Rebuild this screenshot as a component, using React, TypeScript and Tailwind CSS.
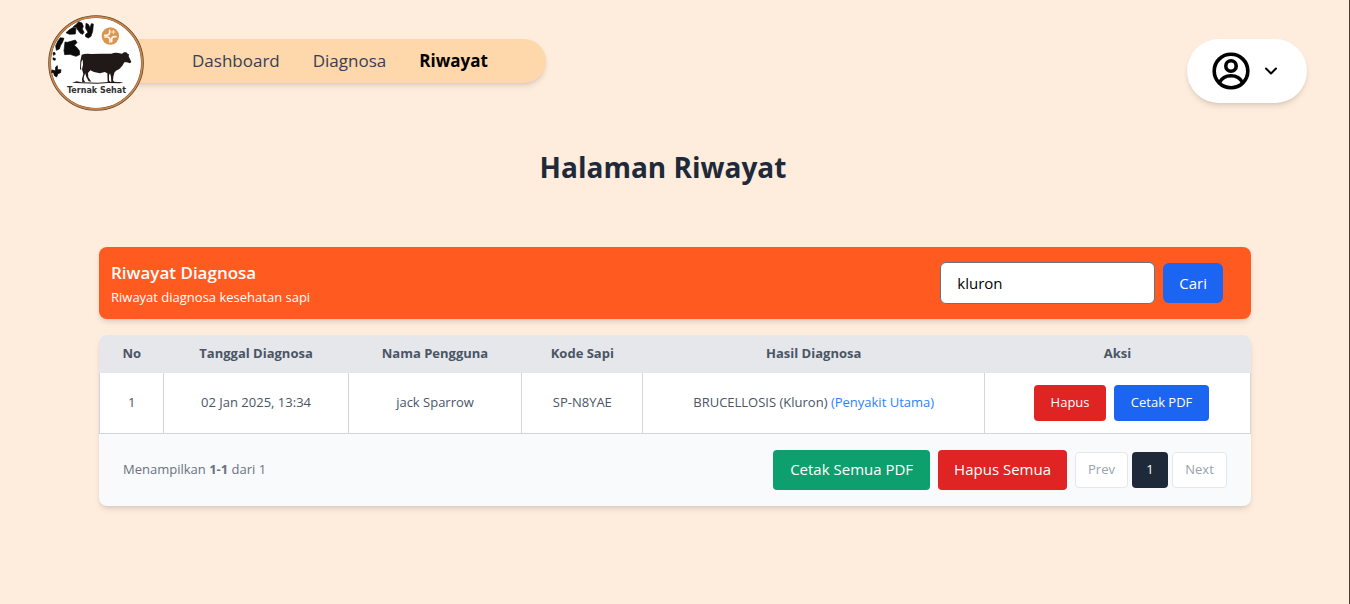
import { useState } from "react";

const columns = [
  { title: "No", width: "w-[5.6%]" },
  { title: "Tanggal Diagnosa", width: "w-[16%]" },
  { title: "Nama Pengguna", width: "w-[15.1%]" },
  { title: "Kode Sapi", width: "w-[10.5%]" },
  { title: "Hasil Diagnosa", width: "w-[29.7%]" },
  { title: "Aksi", width: "w-[23.1%]" },
];

const rows = [
  {
    no: 1,
    date: "02 Jan 2025, 13:34",
    user: "jack Sparrow",
    code: "SP-N8YAE",
    result: "BRUCELLOSIS (Kluron)",
    note: "(Penyakit Utama)",
  },
];

function Logo() {
  return (
    <svg viewBox="0 0 96 96" className="relative z-10 size-24 shrink-0" role="img" aria-label="Ternak Sehat">
      <circle cx="48" cy="48" r="46.4" fill="#fff" stroke="#5b4636" strokeWidth="2.8" />
      <circle cx="48" cy="48" r="46.2" fill="none" stroke="#cf8745" strokeWidth="1.7" />
      <g transform="translate(0 5) scale(0.33333)">
        <g fill="#0b0b0b" stroke="#0b0b0b" strokeWidth="2" strokeLinejoin="round">
          <path d="M54 38 L66 28 L76 22 L84 25 L82 42 L64 43 Z" />
          <path d="M86 12 L92 5 L102 9 L106 19 L103 27 L108 37 L104 43 L97 40 L91 32 L84 22 L76 20 Z" />
          <path d="M114 10 L121 13 L126 23 L130 11 L136 12 L134 34 L129 49 L121 54 L113 50 L112 44 L120 37 L113 25 Z" />
          <path d="M51 66 L58 67 L72 63 L82 60 L87 68 L79 76 L86 82 L94 92 L95 104 L84 109 L66 103 L50 104 L48 92 Z" />
          <path d="M30 62 L37 53 L48 55 L43 68 L38 76 L34 87 L25 91 L23 77 Z" />
          <path d="M15 98 L20 97 L22 103 L16 106 Z" />
          <path d="M15 113 L23 116 L21 121 L15 119 Z" />
          <path d="M23 141 L28 137 L29 149 L39 149 L38 158 L30 161 L26 171 L19 167 L17 158 L11 158 L12 150 L22 152 Z" />
        </g>
        <circle cx="187" cy="48" r="26" fill="#dd944e" />
        <g fill="none" stroke="#fff6ec" strokeWidth="5" strokeLinecap="round">
          <path d="M185 31 V39 Q184 45 177 46 H170" />
          <path d="M171 51 H178 Q185 52 186 59 V66" />
          <path d="M191 65 V58 Q191 51 198 50 H204" />
          <path d="M191 36 H201 M196 31 V41" strokeWidth="2.5" />
        </g>
        <g fill="#211917">
          <path d="M101 104 Q112 100 130 102 L160 101 L190 101 Q200 97 211 99 L222 101 L228 97 L235 97 L239 101 L243 103 L242 109 L247 119 L250 126 L246 130 L237 127 L229 127 L223 137 L214 147 L204 152 L199 158 L196 170 L195 181 L200 187 H190 L189 170 L186 160 L183 166 L183 181 L187 187 H179 L178 160 L170 156 L156 160 L138 156 L127 151 L120 159 L121 172 L130 185 L122 184 L114 169 L112 160 L108 169 L107 179 L112 187 H103 L102 177 L106 162 L102 148 L105 134 L104 118 L100 126 L99 140 L100 151 L96 147 L97 124 Z" />
          <path d="M72 188 L86 184 L100 187 L150 188 L190 185 L226 187 L216 190 L180 189 L148 191 L102 190 Z" />
        </g>
      </g>
      <text x="48.500" y="77.500" textAnchor="middle" fontSize="8" fontWeight="700" fill="#303030" fontFamily="DejaVu Sans, sans-serif">
        Ternak Sehat
      </text>
    </svg>
  );
}

function UserIcon() {
  return (
    <svg viewBox="0 0 40 40" className="size-10" fill="none" stroke="#000" strokeWidth="3.6" aria-hidden="true">
      <circle cx="20" cy="20" r="16.800" />
      <circle cx="20" cy="15" r="5.200" />
      <path d="M8.500 31.500 C13 22.500 27 22.500 31.500 31.500" />
    </svg>
  );
}

export default function App() {
  const [query, setQuery] = useState("kluron");

  return (
    <div className="min-h-screen bg-[#feecdc] font-['Segoe_UI','Open_Sans',sans-serif] text-[15px] shadow-[inset_-1px_0_0_#463c38]">
      <header className="flex items-start justify-between pt-[15px] pr-[43px] pl-12">
        <div className="flex items-start">
          <Logo />
          <nav className="mt-6 -ml-6 flex h-11 items-center gap-[33px] rounded-r-full bg-[#fed7aa] pr-[58px] pl-[72px] text-[17px] font-medium text-gray-700 shadow-md">
            <a href="#dashboard">Dashboard</a>
            <a href="#diagnosa">Diagnosa</a>
            <a href="#riwayat" aria-current="page" className="font-bold text-black">
              Riwayat
            </a>
          </nav>
        </div>
        <button type="button" aria-label="Menu pengguna" className="mt-6 flex h-16 w-[120px] items-center gap-3 rounded-full bg-white pl-6 shadow-md">
          <UserIcon />
          <svg viewBox="0 0 16 16" className="size-4" fill="none" stroke="#000" strokeWidth="2" strokeLinecap="round" strokeLinejoin="round" aria-hidden="true">
            <path d="M3 5.500 L8 10.500 L13 5.500" />
          </svg>
        </button>
      </header>

      <main className="pt-9">
        <h1 className="pr-6 text-center text-[28px] leading-10 font-bold text-gray-800">Halaman Riwayat</h1>

        <div className="mx-auto mt-15 max-w-6xl">
          <section className="flex h-[72px] items-center justify-between rounded-lg bg-[#ff5a1f] pr-7 pl-3 text-white shadow-md">
            <div className="pt-1">
              <h2 className="text-[17px] leading-6 font-semibold">Riwayat Diagnosa</h2>
              <p className="text-[13px] leading-6">Riwayat diagnosa kesehatan sapi</p>
            </div>
            <form className="flex items-center gap-2" onSubmit={(event) => event.preventDefault()}>
              <input
                type="text"
                aria-label="Cari riwayat"
                value={query}
                onChange={(event) => setQuery(event.target.value)}
                className="h-[42px] w-[215px] rounded-md border border-gray-500 bg-white px-4 text-black"
              />
              <button type="submit" className="h-10 rounded-md bg-[#1c64f2] px-4">
                Cari
              </button>
            </form>
          </section>

          <section className="mt-4 overflow-hidden rounded-lg bg-[#f9fafb] shadow-md">
            <table className="w-full table-fixed border-collapse bg-gray-200 text-center text-[13px] text-gray-600">
              <thead>
                <tr className="h-[38px]">
                  {columns.map((column) => (
                    <th key={column.title} scope="col" className={`${column.width} font-bold`}>
                      {column.title}
                    </th>
                  ))}
                </tr>
              </thead>
              <tbody className="bg-white">
                {rows.map((row) => (
                  <tr key={row.no} className="h-[60px] *:border-x *:border-b *:border-gray-300">
                    <td>{row.no}</td>
                    <td>{row.date}</td>
                    <td>{row.user}</td>
                    <td>{row.code}</td>
                    <td>
                      {row.result} <span className="text-blue-500">{row.note}</span>
                    </td>
                    <td>
                      <div className="flex justify-center gap-2 pl-2 text-white">
                        <button type="button" className="h-9 w-[72px] rounded bg-[#e02424]">
                          Hapus
                        </button>
                        <button type="button" className="h-9 w-[95px] rounded bg-[#1c64f2]">
                          Cetak PDF
                        </button>
                      </div>
                    </td>
                  </tr>
                ))}
              </tbody>
            </table>

            <div className="flex items-center justify-between px-6 py-4">
              <p className="text-[13px] text-gray-500">
                Menampilkan <b>1-1</b> dari 1
              </p>
              <div className="flex items-center gap-2 text-white">
                <button type="button" className="h-10 rounded bg-[#0e9f6e] px-[17px]">
                  Cetak Semua PDF
                </button>
                <button type="button" className="h-10 rounded bg-[#e02424] px-4">
                  Hapus Semua
                </button>
                <div className="flex gap-1 text-[13px]">
                  <button type="button" disabled className="h-9 w-[53px] rounded border border-gray-200 bg-white text-gray-400">
                    Prev
                  </button>
                  <button type="button" aria-current="page" className="size-9 rounded bg-gray-800">
                    1
                  </button>
                  <button type="button" disabled className="h-9 w-[55px] rounded border border-gray-200 bg-white text-gray-400">
                    Next
                  </button>
                </div>
              </div>
            </div>
          </section>
        </div>
      </main>
    </div>
  );
}
